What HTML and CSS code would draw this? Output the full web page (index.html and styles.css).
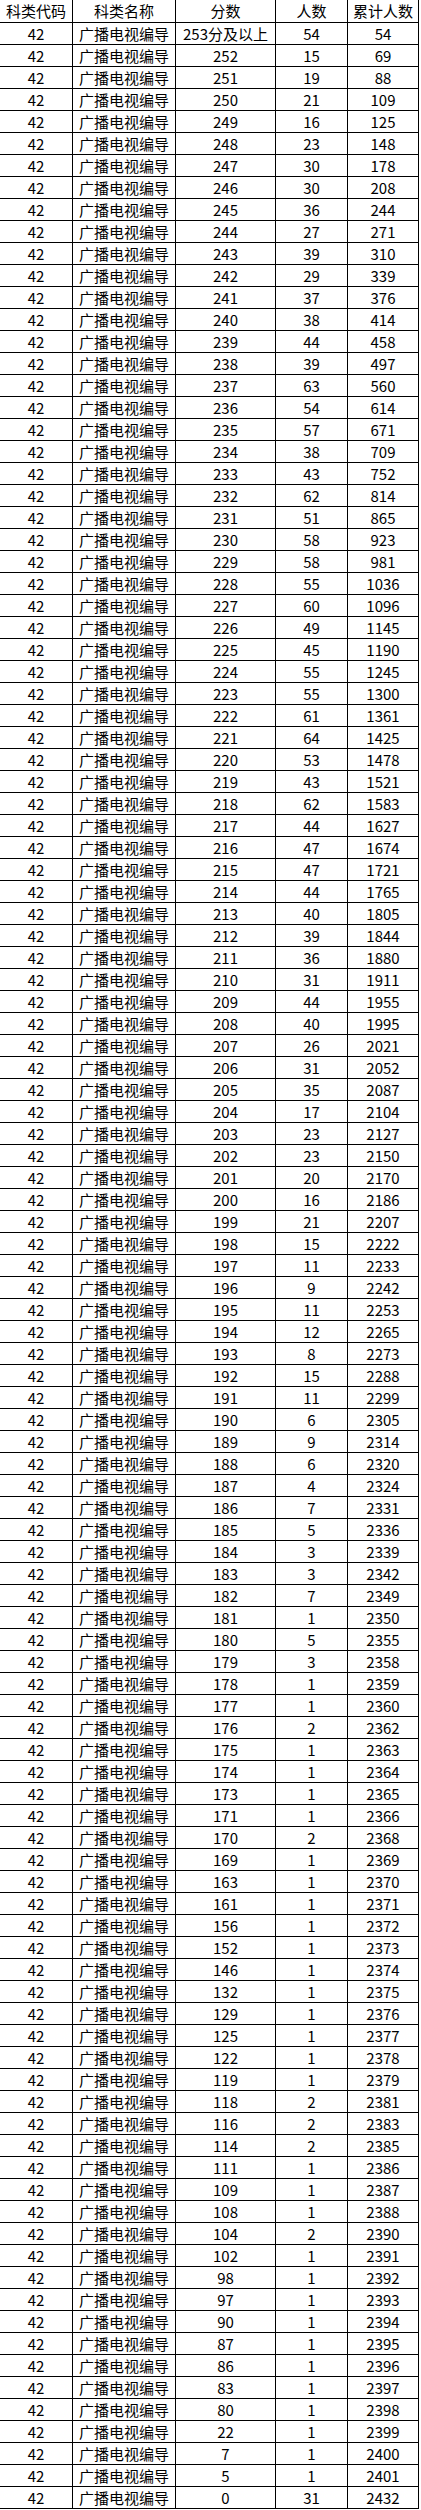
FILE: index.html
```html
<!DOCTYPE html>
<html lang="zh-CN">
<head>
<meta charset="utf-8">
<title>广播电视编导 分数段</title>
<link rel="stylesheet" href="styles.css">
</head>
<body>
<table class="score-table">
<colgroup>
<col class="c1"><col class="c2"><col class="c3"><col class="c4"><col class="c5">
</colgroup>
<thead>
<tr><th>科类代码</th><th>科类名称</th><th>分数</th><th>人数</th><th>累计人数</th></tr>
</thead>
<tbody id="rows">
</tbody>
</table>
<script src="app.js"></script>
</body>
</html>
```

FILE: app.js
```js
var data = [
["253分及以上",54,54],[252,15,69],[251,19,88],[250,21,109],[249,16,125],[248,23,148],[247,30,178],[246,30,208],[245,36,244],[244,27,271],
[243,39,310],[242,29,339],[241,37,376],[240,38,414],[239,44,458],[238,39,497],[237,63,560],[236,54,614],[235,57,671],[234,38,709],
[233,43,752],[232,62,814],[231,51,865],[230,58,923],[229,58,981],[228,55,1036],[227,60,1096],[226,49,1145],[225,45,1190],[224,55,1245],
[223,55,1300],[222,61,1361],[221,64,1425],[220,53,1478],[219,43,1521],[218,62,1583],[217,44,1627],[216,47,1674],[215,47,1721],[214,44,1765],
[213,40,1805],[212,39,1844],[211,36,1880],[210,31,1911],[209,44,1955],[208,40,1995],[207,26,2021],[206,31,2052],[205,35,2087],[204,17,2104],
[203,23,2127],[202,23,2150],[201,20,2170],[200,16,2186],[199,21,2207],[198,15,2222],[197,11,2233],[196,9,2242],[195,11,2253],[194,12,2265],
[193,8,2273],[192,15,2288],[191,11,2299],[190,6,2305],[189,9,2314],[188,6,2320],[187,4,2324],[186,7,2331],[185,5,2336],[184,3,2339],
[183,3,2342],[182,7,2349],[181,1,2350],[180,5,2355],[179,3,2358],[178,1,2359],[177,1,2360],[176,2,2362],[175,1,2363],[174,1,2364],
[173,1,2365],[171,1,2366],[170,2,2368],[169,1,2369],[163,1,2370],[161,1,2371],[156,1,2372],[152,1,2373],[146,1,2374],[132,1,2375],
[129,1,2376],[125,1,2377],[122,1,2378],[119,1,2379],[118,2,2381],[116,2,2383],[114,2,2385],[111,1,2386],[109,1,2387],[108,1,2388],
[104,2,2390],[102,1,2391],[98,1,2392],[97,1,2393],[90,1,2394],[87,1,2395],[86,1,2396],[83,1,2397],[80,1,2398],[22,1,2399],
[7,1,2400],[5,1,2401],[0,31,2432]
];
var tb = document.getElementById("rows");
var html = "";
for (var i = 0; i < data.length; i++) {
  var r = data[i];
  html += "<tr><td>42</td><td>广播电视编导</td><td>" + r[0] + "</td><td>" + r[1] + "</td><td>" + r[2] + "</td></tr>";
}
tb.innerHTML = html;
```

FILE: styles.css
```css
html, body {
  margin: 0;
  padding: 0;
  background: #fff;
}
.score-table {
  border-collapse: separate;
  border-spacing: 0;
  table-layout: fixed;
  width: 419px;
  font-family: "Noto Sans CJK SC", "Microsoft YaHei", sans-serif;
  font-size: 15px;
  color: #000;
}
.score-table .c1 { width: 73px; }
.score-table .c2 { width: 103px; }
.score-table .c3 { width: 100px; }
.score-table .c4 { width: 72px; }
.score-table .c5 { width: 71px; }
.score-table th,
.score-table td {
  box-sizing: border-box;
  padding: 0;
  border-right: 1px solid #000;
  border-bottom: 1px solid #000;
  text-align: center;
  vertical-align: middle;
  white-space: nowrap;
  overflow: hidden;
  font-weight: normal;
  line-height: 21px;
}
.score-table th {
  height: 23px;
  line-height: 22px;
}
.score-table td {
  height: 22px;
}
```
